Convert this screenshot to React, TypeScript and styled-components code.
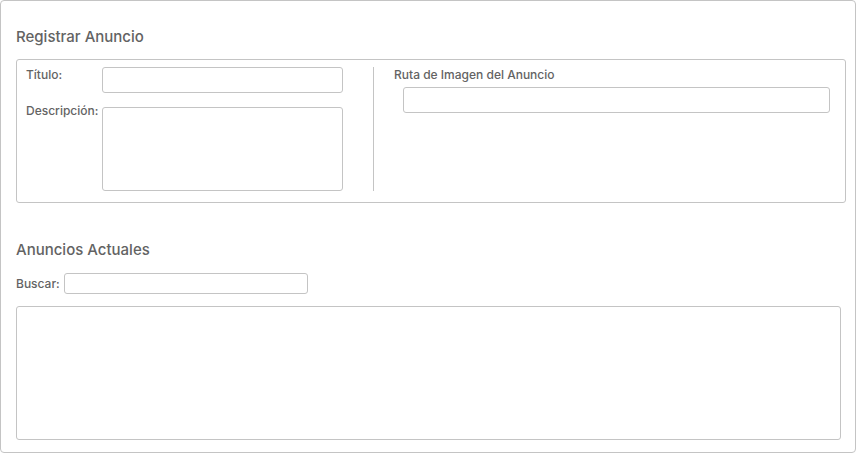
import styled, { createGlobalStyle } from 'styled-components';

const GlobalStyle = createGlobalStyle`
  html, body {
    margin: 0;
    padding: 0;
    background: #ffffff;
  }
  body {
    font-family: Inter, "Noto Sans", "Liberation Sans", sans-serif;
  }
`;

const App = () => {
  return (
    <>
      <GlobalStyle />
      <Page>
        <SectionTitle $top={25}>Registrar Anuncio</SectionTitle>
        <FormBox>
          <LeftColumn>
            <Label>Título:</Label>
            <TextInput type="text" />
            <Label $shift={-4}>Descripción:</Label>
            <TextArea />
          </LeftColumn>
          <Divider />
          <RightColumn>
            <Label>Ruta de Imagen del Anuncio</Label>
            <WideInput type="text" />
          </RightColumn>
        </FormBox>

        <SectionTitle $top={36}>Anuncios Actuales</SectionTitle>
        <SearchRow>
          <Label>Buscar:</Label>
          <SearchInput type="text" />
        </SearchRow>
        <ListBox />
      </Page>
    </>
  );
};

export default App;

const Page = styled.div`
  box-sizing: border-box;
  width: 856px;
  height: 453px;
  border: 1px solid #c4c4c4;
  border-radius: 4px;
  padding: 0 15px 0 15px;
  display: flex;
  flex-direction: column;
`;

const SectionTitle = styled.h2<{ $top: number }>`
  margin: ${({ $top }) => $top}px 0 0 0;
  font-size: 15px;
  line-height: 22px;
  font-weight: 500;
  color: #636363;
`;

const FormBox = styled.div`
  box-sizing: border-box;
  margin-top: 11px;
  width: 830px;
  height: 144px;
  border: 1px solid #c4c4c4;
  border-radius: 3px;
  padding: 7px 15px 11px 9px;
  display: flex;
  align-items: stretch;
`;

const LeftColumn = styled.div`
  display: grid;
  grid-template-columns: 76px 241px;
  grid-template-rows: 26px 84px;
  row-gap: 14px;
  align-items: start;
`;

const Label = styled.label<{ $shift?: number }>`
  font-size: 12px;
  line-height: 16px;
  font-weight: 500;
  color: #636363;
  white-space: nowrap;
  margin-top: ${({ $shift }) => $shift ?? 0}px;
`;

const fieldBase = `
  box-sizing: border-box;
  border: 1px solid #c4c4c4;
  border-radius: 3px;
  background: #ffffff;
  outline: none;
  font-family: inherit;
  margin: 0;
`;

const TextInput = styled.input`
  ${fieldBase}
  width: 241px;
  height: 26px;
`;

const TextArea = styled.textarea`
  ${fieldBase}
  width: 241px;
  height: 84px;
  resize: none;
`;

const Divider = styled.div`
  width: 1px;
  background: #c4c4c4;
  margin-left: 30px;
`;

const RightColumn = styled.div`
  flex: 1;
  display: flex;
  flex-direction: column;
  padding-left: 20px;
  gap: 4px;
`;

const WideInput = styled.input`
  ${fieldBase}
  width: 427px;
  height: 26px;
  margin-left: 9px;
`;

const SearchRow = styled.div`
  margin-top: 12px;
  display: flex;
  align-items: center;
  gap: 4px;
`;

const SearchInput = styled.input`
  ${fieldBase}
  width: 244px;
  height: 21px;
`;

const ListBox = styled.div`
  box-sizing: border-box;
  margin-top: 12px;
  width: 825px;
  height: 134px;
  border: 1px solid #c4c4c4;
  border-radius: 3px;
`;
